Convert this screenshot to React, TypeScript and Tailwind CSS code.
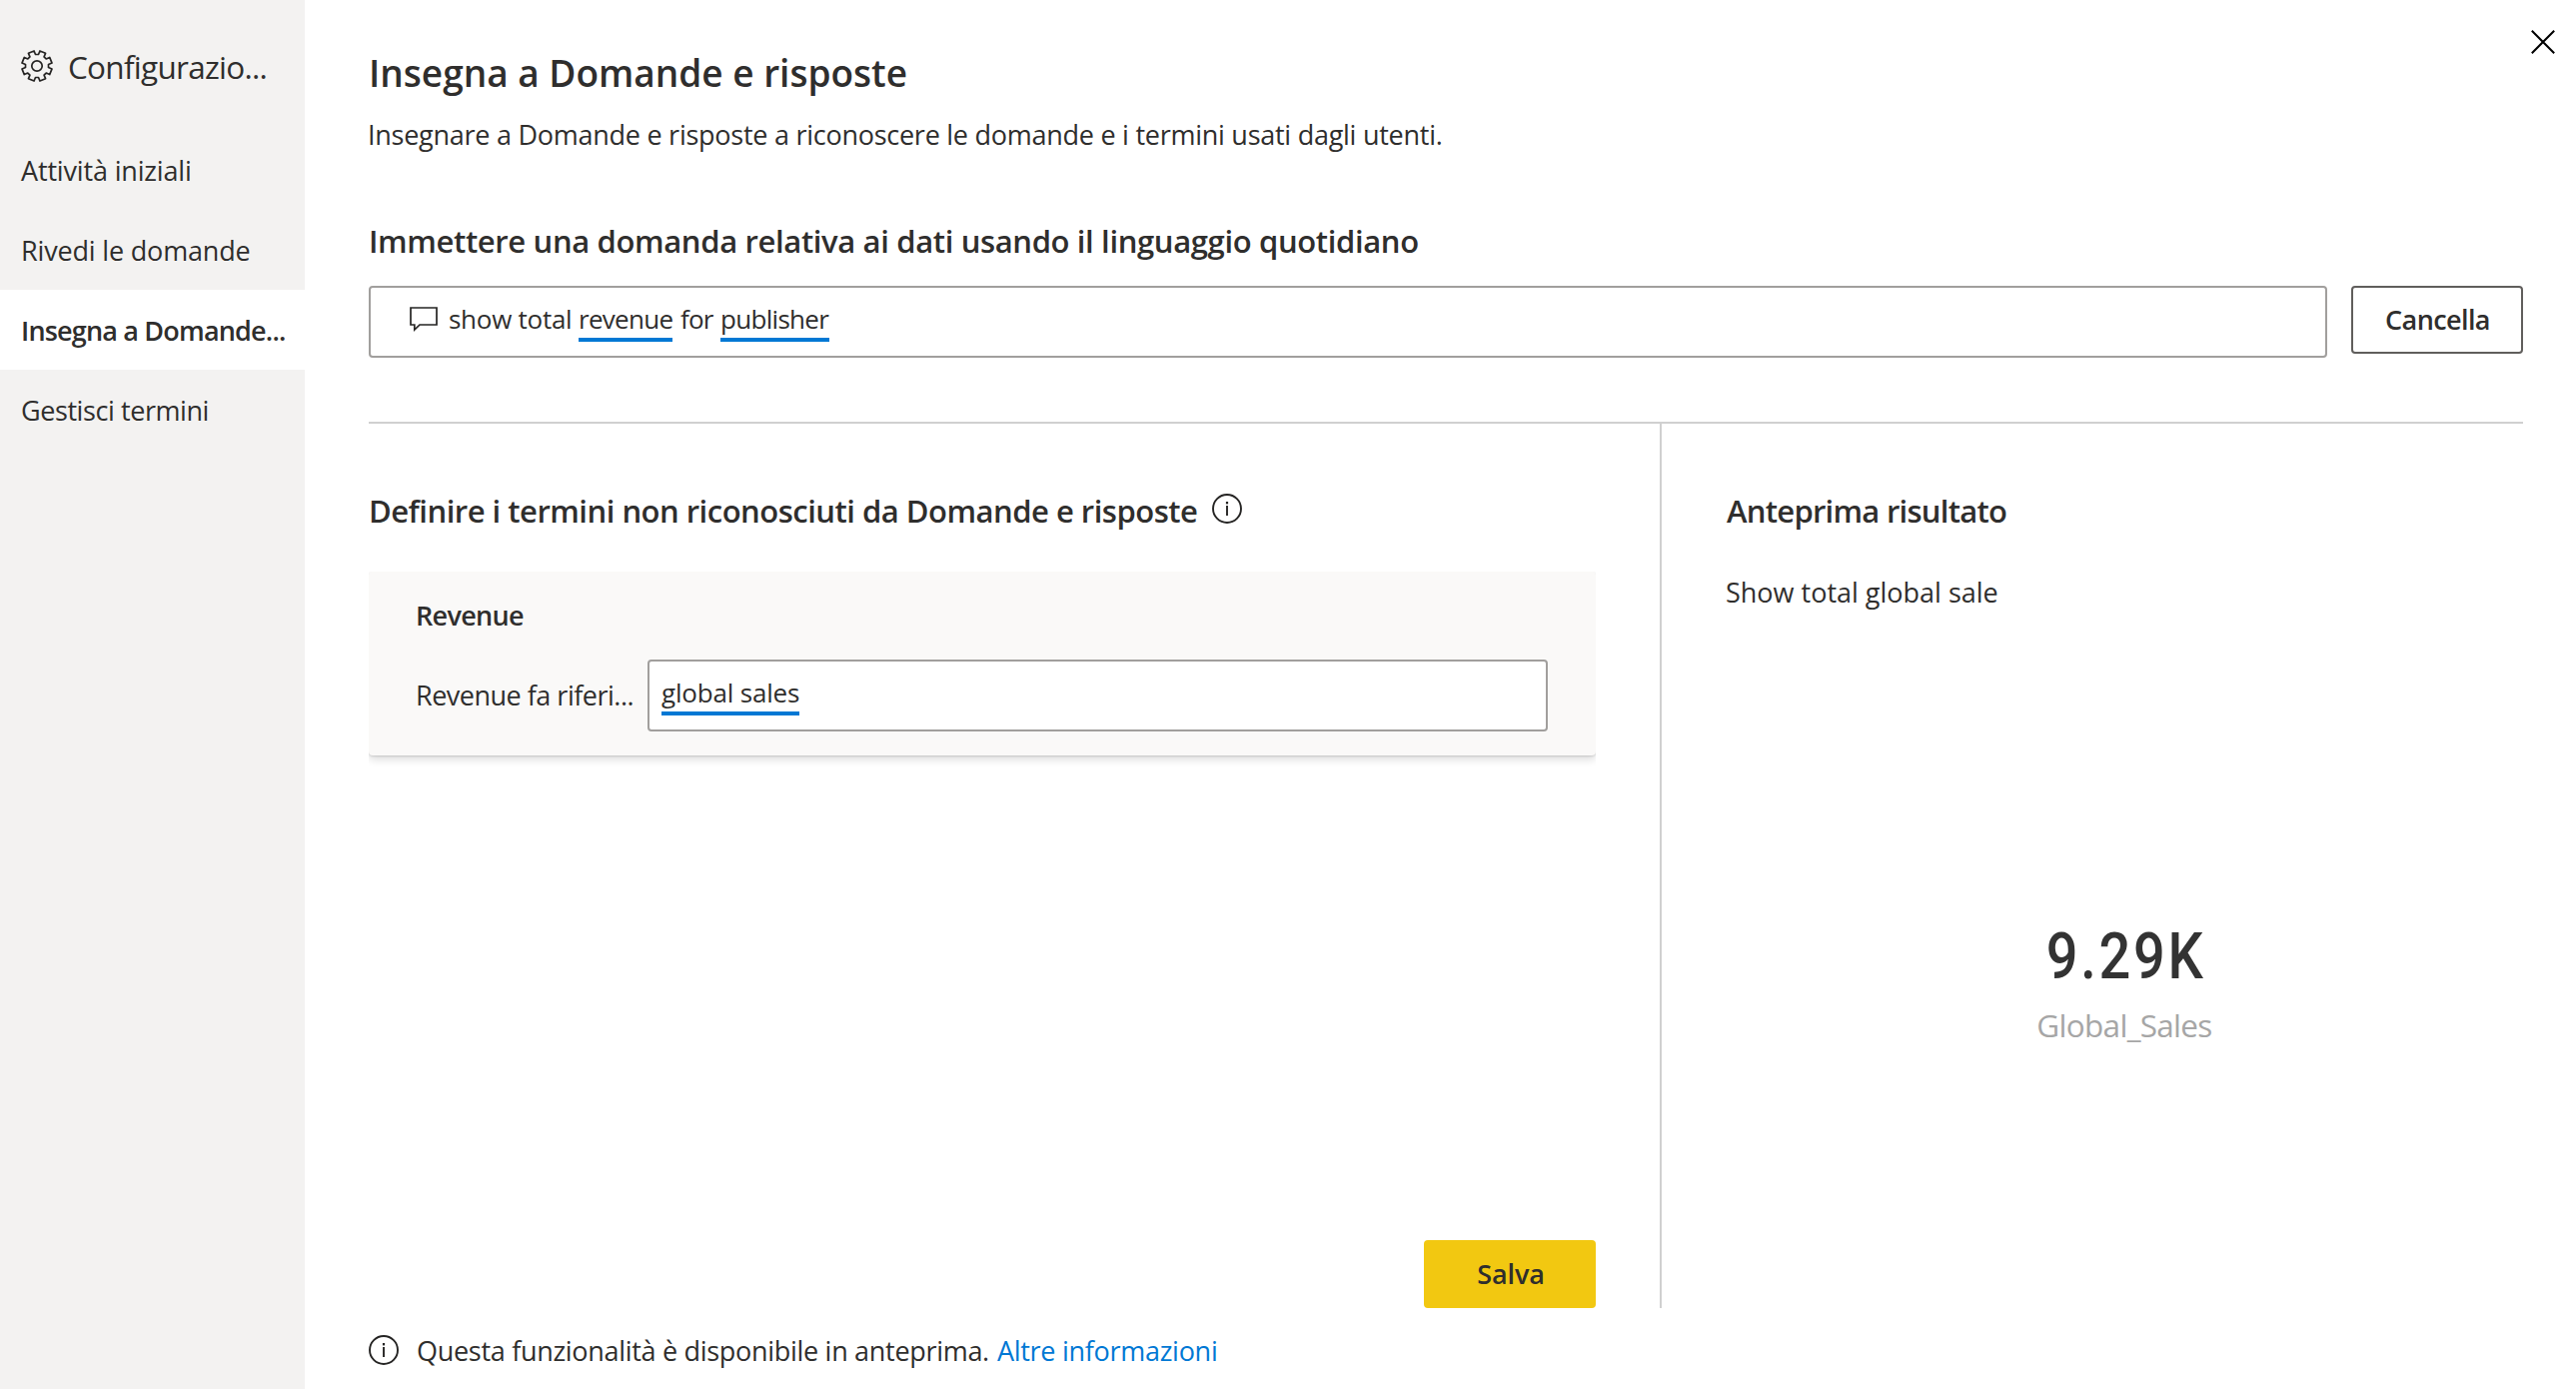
import type { ReactNode } from "react";

const gearPoints = Array.from({ length: 8 }, (_, i) => {
  const center = 22.5 + i * 45;
  return [
    [center - 15, 11.6],
    [center - 11.5, 15.3],
    [center + 11.5, 15.3],
    [center + 15, 11.6],
  ].map(([deg, r]) => {
    const a = (deg * Math.PI) / 180;
    return `${(17 + r * Math.cos(a)).toFixed(2)},${(17 + r * Math.sin(a)).toFixed(2)}`;
  });
})
  .flat()
  .join(" ");

function GearIcon() {
  return (
    <svg className="h-[34px] w-[34px] shrink-0" viewBox="0 0 34 34" fill="none" stroke="#252423" strokeWidth="1.7" strokeLinejoin="round">
      <polygon points={gearPoints} />
      <circle cx="17" cy="17" r="5.2" />
    </svg>
  );
}

function InfoIcon() {
  return (
    <svg className="h-[30px] w-[30px] shrink-0" viewBox="0 0 30 30" fill="none" stroke="#252423">
      <circle cx="15" cy="15" r="14" strokeWidth="1.9" />
      <path d="M15 12v10" strokeWidth="1.9" />
      <path d="M15 8v2.4" strokeWidth="2.2" />
    </svg>
  );
}

function MessageIcon() {
  return (
    <svg className="h-[26px] w-[28px] shrink-0" viewBox="0 0 28 26" fill="none" stroke="#252423" strokeWidth="1.7">
      <path d="M1 2h26v17H10l-5.200 5V19H1z" />
    </svg>
  );
}

function CloseIcon() {
  return (
    <svg className="h-6 w-6" viewBox="0 0 24 24" fill="none" stroke="#000" strokeWidth="2">
      <path d="M.8.8l22.400 22.400M23.200.8L.8 23.200" />
    </svg>
  );
}

function NavItem({ children, active }: { children: ReactNode; active?: boolean }) {
  return (
    <li
      className={
        active
          ? "h-20 bg-white pl-[21px] leading-[82px] font-semibold tracking-[-0.82px]"
          : "h-20 pl-[21px] leading-[82px]"
      }
    >
      {children}
    </li>
  );
}

function Sidebar() {
  return (
    <nav className="w-[305px] shrink-0 bg-[#f3f2f1]">
      <div className="flex h-[130px] items-start pt-[49px] pl-5">
        <GearIcon />
        <span className="ml-[14px] text-[31.5px] leading-[36px] tracking-[-0.72px]">Configurazio...</span>
      </div>
      <ul>
        <NavItem><span className="tracking-[-0.16px]">Attività iniziali</span></NavItem>
        <NavItem><span className="tracking-[-0.17px]">Rivedi le domande</span></NavItem>
        <NavItem active>Insegna a Domande...</NavItem>
        <NavItem><span className="tracking-[-0.42px]">Gestisci termini</span></NavItem>
      </ul>
    </nav>
  );
}

function TermCard() {
  return (
    <div className="mt-10 overflow-hidden pb-6">
      <div className="rounded-[4px] bg-[#faf9f8] pt-[26px] pr-12 pb-6 pl-[47px] shadow-[0_4px_9px_rgba(0,0,0,0.14),0_1px_2px_rgba(0,0,0,0.12)]">
        <h3 className="leading-9 font-semibold tracking-[-0.68px]">Revenue</h3>
        <div className="mt-[26px] flex">
          <span className="w-[232px] leading-[72px] tracking-[-0.5px]">Revenue fa riferi...</span>
          <div className="h-[72px] flex-1 rounded-[4px] border-2 border-[#a19f9d] bg-white pt-3 pl-3">
            <span className="block w-[138px] border-b-4 border-[#0078d4] text-[26px] leading-[38px] tracking-[-0.18px] whitespace-nowrap">
              global sales
            </span>
          </div>
        </div>
      </div>
    </div>
  );
}

export default function App() {
  return (
    <div className="relative flex h-[1390px] w-[2578px] overflow-hidden bg-white font-['Open_Sans',sans-serif] text-[27px] text-[#2f2e2d]">
      <Sidebar />
      <main className="flex-1 pt-[51px] pr-[53px] pl-16">
        <h1 className="text-[37px] leading-[44px] font-semibold">Insegna a Domande e risposte</h1>
        <p className="mt-[22px] -ml-px leading-9 tracking-[-0.26px]">
          Insegnare a Domande e risposte a riconoscere le domande e i termini usati dagli utenti.
        </p>
        <h2 className="mt-[67px] text-[31px] leading-[42px] font-semibold tracking-[-0.36px]">
          Immettere una domanda relativa ai dati usando il linguaggio quotidiano
        </h2>
        <div className="mt-6 flex items-start gap-6">
          <div className="flex h-[72px] flex-1 items-start rounded-[4px] border-2 border-[#a19f9d] pt-3 pl-[39px] text-[26px] leading-[38px] whitespace-nowrap">
            <div className="pt-[6px]"><MessageIcon /></div>
            <span className="ml-[11px] w-[130px] tracking-[-0.27px]">show total</span>
            <span className="w-[94px] border-b-4 border-[#0078d4] tracking-[-0.7px]">revenue</span>
            <span className="ml-2 w-10 tracking-[-0.8px]">for</span>
            <span className="w-[109px] border-b-4 border-[#0078d4] tracking-[-0.7px]">publisher</span>
          </div>
          <button className="h-[68px] w-[172px] rounded-[4px] border-2 border-[#605e5c] pt-px pl-px font-semibold tracking-[-0.6px]">
            Cancella
          </button>
        </div>
        <div className="mt-16 flex h-[887px] border-t-2 border-[#d0d0d0]">
          <section className="flex w-[1294px] flex-col border-r-2 border-[#d0d0d0] pt-[66px] pr-16">
            <div className="flex items-start">
              <h2 className="text-[31px] leading-[42px] font-semibold tracking-[-0.5px]">
                Definire i termini non riconosciuti da Domande e risposte
              </h2>
              <div className="ml-[15px] pt-1"><InfoIcon /></div>
            </div>
            <TermCard />
            <button className="mt-auto h-[68px] w-[172px] self-end rounded-[4px] bg-[#f2c811] pl-[2px] font-semibold tracking-[-0.1px]">
              Salva
            </button>
          </section>
          <section className="flex-1 pt-[66px] pl-16">
            <h2 className="pl-px text-[31px] leading-[42px] font-semibold tracking-[-0.73px]">Anteprima risultato</h2>
            <p className="mt-[43px] leading-9">Show total global sale</p>
            <div className="mt-[311px] flex flex-col items-center">
              <span className="scale-x-[0.86] pl-1 font-['Roboto',sans-serif] text-[65px] leading-[70px] font-medium tracking-[3.2px] text-[#333]">
                9.29K
              </span>
              <span className="mt-[13px] text-[31.5px] leading-[42px] tracking-[-0.7px] text-[#a6a6a6]">Global_Sales</span>
            </div>
          </section>
        </div>
        <footer className="mt-[25px] flex leading-9">
          <div className="pt-[2px]"><InfoIcon /></div>
          <span className="ml-[18px] tracking-[-0.3px]">Questa funzionalità è disponibile in anteprima.</span>
          <a className="ml-2 tracking-[-0.28px] text-[#0078d4]">Altre informazioni</a>
        </footer>
      </main>
      <button className="absolute top-[30px] right-[21px]" aria-label="Chiudi">
        <CloseIcon />
      </button>
    </div>
  );
}
